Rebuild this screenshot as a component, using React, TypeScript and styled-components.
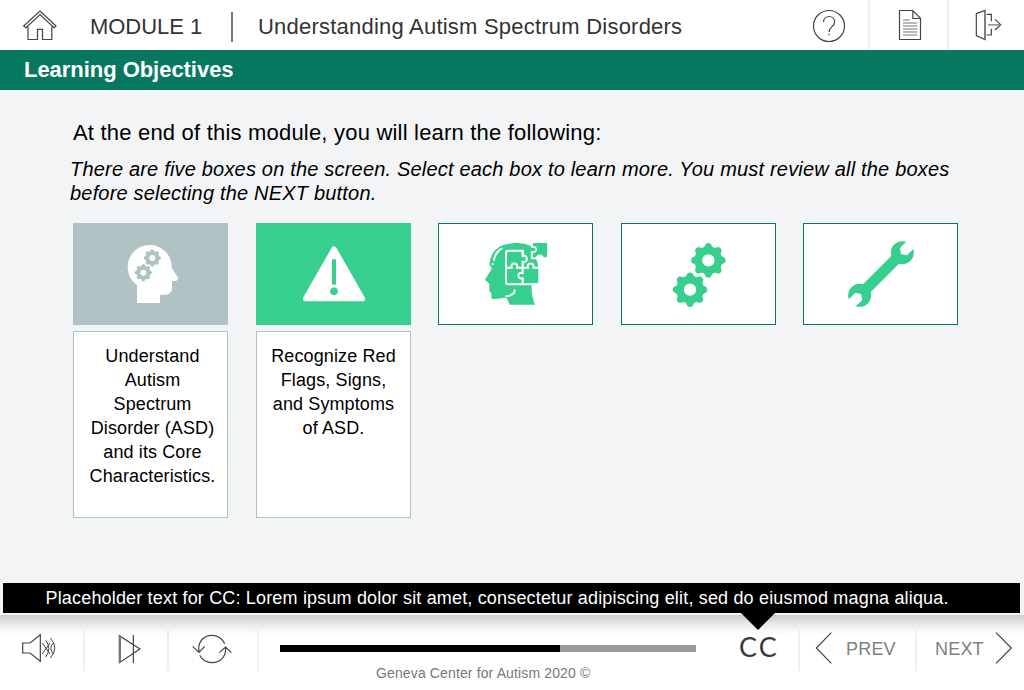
import React from 'react';
import styled, { createGlobalStyle } from 'styled-components';

const GREEN = '#36cf8e';
const TEAL = '#077860';
const MUTED = '#b0c2c4';
const INK = '#444';

const GlobalStyle = createGlobalStyle`
  * { box-sizing: border-box; }
  body {
    margin: 0;
    background: #f2f4f6;
    font-family: 'Liberation Sans', Arial, sans-serif;
    letter-spacing: 0.2px;
    color: #000;
  }
  h1, h2, p { margin: 0; font-weight: normal; }
  svg { display: block; flex: none; }
`;

const Page = styled.div`
  width: 1024px;
  height: 690px;
  display: flex;
  flex-direction: column;
  overflow: hidden;
`;

const Header = styled.header`
  height: 50px;
  flex: none;
  display: flex;
  align-items: center;
  background: #fff;
  color: #333;
  font-size: 22px;
  padding-left: 23px;
`;

const ModuleName = styled.span`
  width: 141px;
  padding: 3px 0 0 32px;
  letter-spacing: -0.05px;
  white-space: nowrap;
`;

const TitleRule = styled.div`
  width: 2px;
  height: 30px;
  margin: 3px 25px 0 32px;
  background: #777;
`;

const Title = styled.h1`
  flex: 1;
  font-size: 22px;
  letter-spacing: 0.22px;
  padding-top: 3px;
`;

const Tool = styled.button<{ $w: number; $pad: number; $line?: boolean }>`
  width: ${p => p.$w}px;
  height: 50px;
  padding: 0 0 0 ${p => p.$pad}px;
  border: 0;
  border-left: ${p => (p.$line ? '2px solid #f0f0f0' : '0')};
  background: none;
  display: flex;
  align-items: center;
`;

const SectionBar = styled.h2`
  height: 40px;
  flex: none;
  display: flex;
  align-items: center;
  padding-left: 24px;
  background: ${TEAL};
  color: #fff;
  font-size: 22px;
  font-weight: bold;
  letter-spacing: -0.04px;
`;

const Content = styled.main`
  height: 493px;
  flex: none;
  padding: 30px 66px 0 73px;
`;

const Lead = styled.p`
  font-size: 22px;
  line-height: 26px;
`;

const Instruction = styled.p`
  margin: 11px 0 18px -3px;
  font-size: 20px;
  line-height: 24px;
  font-style: italic;
  letter-spacing: 0.19px;
  white-space: nowrap;
`;

const Cards = styled.div`
  display: flex;
  justify-content: space-between;
  align-items: flex-start;
`;

const Column = styled.div`
  width: 155px;
  display: flex;
  flex-direction: column;
  gap: 6px;
`;

const Tile = styled.button<{ $fill?: string }>`
  width: 155px;
  height: 102px;
  padding: 0;
  border: 0;
  background: ${p => p.$fill || '#fff'};
  box-shadow: ${p => (p.$fill ? 'none' : `inset 0 0 0 1px ${TEAL}`)};
`;

const Detail = styled.div<{ $inset: number }>`
  height: 187px;
  padding: 12px 0 0 ${p => p.$inset}px;
  border: 1px solid ${MUTED};
  background: #fff;
  font-size: 18px;
  line-height: 24px;
  letter-spacing: 0.12px;
  text-align: center;
`;

const Caption = styled.div`
  position: relative;
  z-index: 1;
  height: 30px;
  flex: none;
  margin: 0 4px 2px 3px;
  padding-left: 42.5px;
  background: #000;
  color: #fff;
  font-size: 18px;
  line-height: 30px;
  letter-spacing: 0.17px;
  white-space: nowrap;
`;

const Pointer = styled.div`
  position: absolute;
  left: 737px;
  top: 29px;
  border: 18px solid transparent;
  border-top-color: #000;
  border-bottom: 0;
`;

const Footer = styled.footer`
  height: 75px;
  flex: none;
  display: flex;
  padding-top: 9px;
  background: linear-gradient(#cccccc 0, #e2e2e2 7px, #f7f7f7 15px, #fff 20px);
`;

const Cell = styled.div<{ $w: number; $pad: number; $line?: boolean }>`
  width: ${p => p.$w}px;
  height: 47px;
  padding-left: ${p => p.$pad}px;
  border-right: ${p => (p.$line ? '2px solid #f0f0f0' : '0')};
  display: flex;
  align-items: center;
  color: #808080;
  font-size: 18px;
`;

const NextCell = styled(Cell)`
  justify-content: space-between;
`;

const Progress = styled.div`
  width: 460px;
  padding: 21px 0 0 21px;
`;

const Track = styled.div`
  width: 416px;
  height: 7px;
  background: #999;
`;

const Played = styled.div`
  height: 7px;
  background: #000;
`;

const Copyright = styled.p`
  margin: 13px 0 0 96px;
  color: #777;
  font-size: 14px;
  line-height: 17px;
  letter-spacing: 0.13px;
`;

const CcLabel = styled.span`
  margin-top: -2px;
  font-family: Lato, sans-serif;
  font-size: 27px;
  letter-spacing: 2px;
  color: #3a3a3a;
`;

const NavText = styled.span<{ $gap: number }>`
  margin: 3px 0 0 ${p => p.$gap}px;
`;

const Line = styled.svg`
  fill: none;
  stroke: ${INK};
  stroke-width: 3.6;
`;

const gear = (cx: number, cy: number, r: number, hole: number) => {
  const pt = (rad: number, deg: number) => {
    const a = (deg * Math.PI) / 180;
    return `${(cx + rad * Math.cos(a)).toFixed(1)},${(cy + rad * Math.sin(a)).toFixed(1)}`;
  };
  let d = '';
  for (let i = 0; i < 8; i++) {
    const a = i * 45;
    d += `${i ? 'L' : 'M'}${pt(r * 0.83, a - 15)}L${pt(r * 0.97, a - 8)}Q${pt(r * 1.03, a)} ${pt(r * 0.97, a + 8)}L${pt(r * 0.83, a + 15)}Q${pt(r * 0.77, a + 22.5)} ${pt(r * 0.83, a + 30)}`;
  }
  return `${d}ZM${cx - hole},${cy}a${hole},${hole} 0 1 0 ${hole * 2},0a${hole},${hole} 0 1 0 ${-hole * 2},0Z`;
};

const HeadGears = () => (
  <svg width="155" height="102" viewBox="39 24 465 306">
    <path fill="#fff" d="M231,264V210A66,66 0 1 1 335,158L353,186Q356,198 345,198H336V222Q335,238 316,239H300V264Z" />
    <path fill={MUTED} fillRule="evenodd" d={gear(277, 129, 26, 9)} />
    <path fill={MUTED} fillRule="evenodd" d={gear(250, 173, 26, 9)} />
  </svg>
);

const Warning = () => (
  <svg width="155" height="102" viewBox="18 24 465 306">
    <path d="M252,102L337,251H167Z" fill="#fff" stroke="#fff" strokeWidth="16" strokeLinejoin="round" />
    <rect x="246" y="133" width="12" height="76" fill={GREEN} />
    <circle cx="252" cy="229" r="11.5" fill={GREEN} />
  </svg>
);

const HeadPuzzle = () => (
  <svg width="155" height="102" viewBox="24 24 465 306">
    <path
      fill={GREEN}
      d="M178,150C182,118 194,84 266,84Q288,85 304,94V131H318Q323,140 325,157V205H305Q303,240 315,269H240L229,248Q208,250 190,253Q184,252 184,246V234L178,228V206L165,194Q172,182 184,164V155Z"
    />
    <path fill={GREEN} d="M306,84H351V127H341A12,12 0 0 0 318,127L309,129V113L303,110V96L309,94Z" />
    <g fill="none" stroke="#fff" strokeWidth="6">
      <path d="M278,120V107H234Q228,107 228,113V201Q228,208 235,208H330" />
      <path d="M278,105V123C295,118 295,145 278,140V158" />
      <path d="M228,158H245C240,141 266,141 261,158H294C289,141 315,141 310,158H328" />
      <path d="M278,158V174C261,169 261,195 278,190V208" />
      <path strokeWidth="5" d="M306,82V96C324,92 323,115 305,111V130H318" />
      <path strokeLinecap="round" d="M192,135Q195,112 215,101M229,244Q254,240 254,226" />
    </g>
    <circle cx="188" cy="147" r="3.5" fill="#fff" />
  </svg>
);

const Gears = () => (
  <svg width="155" height="102" viewBox="33 24 465 306">
    <path fill={GREEN} fillRule="evenodd" d={gear(295, 136, 52, 18.5)} />
    <path fill={GREEN} fillRule="evenodd" d={gear(240, 224, 52, 18.5)} />
  </svg>
);

const Wrench = () => (
  <svg width="155" height="102" viewBox="24 24 465 306">
    <path d="M310,125L206,229" stroke={GREEN} strokeWidth="33" />
    <circle cx="322" cy="113" r="34.5" fill={GREEN} />
    <circle cx="194" cy="241" r="34.5" fill={GREEN} />
    <path fill="#fff" d="M333,81L315,99L318,118L336,121L355,102L370,66Z" />
    <path fill="#fff" d="M162,252L181,233L198,237L202,255L183,273L146,288Z" />
  </svg>
);

const cards = [
  { Icon: HeadGears, fill: MUTED, inset: 4, lines: ['Understand', 'Autism', 'Spectrum', 'Disorder (ASD)', 'and its Core', 'Characteristics.'] },
  { Icon: Warning, fill: GREEN, inset: 1, lines: ['Recognize Red', 'Flags, Signs,', 'and Symptoms', 'of ASD.'] },
  { Icon: HeadPuzzle },
  { Icon: Gears },
  { Icon: Wrench },
];

export default function App() {
  const played = 280;
  return (
    <Page>
      <GlobalStyle />
      <Header>
        <Line width="35" height="32" viewBox="69 27 105 96">
          <path d="M120,33L168,78L162,83L120,44L78,83L71,78ZM84,80V118.500H112.500V88H127.500V118.500H155.500V80" />
        </Line>
        <ModuleName>MODULE 1</ModuleName>
        <TitleRule />
        <Title>Understanding Autism Spectrum Disorders</Title>
        <Tool $w={56} $pad={0} aria-label="Help">
          <Line width="34" height="36" viewBox="96 21 102 108">
            <circle cx="147" cy="78" r="46.500" />
            <path d="M130.500,66C131,44 164,44 164,66C164,80 147,80 147,96M147,101V106" />
          </Line>
        </Tool>
        <Tool $w={79} $pad={28} $line aria-label="Transcript">
          <Line width="24" height="32" viewBox="354 27 72 96">
            <path d="M358.500,31.500H398L421.500,55V118.500H358.500ZM398.500,31V55.500H422" />
            <path stroke="#777" d="M369,60H389M369,69H412M369,78H412M369,87H412M369,96H412M369,105H412" />
          </Line>
        </Tool>
        <Tool $w={77} $pad={26} $line aria-label="Exit">
          <Line width="28" height="32" viewBox="585 27 84 96">
            <path d="M589,41L615,31V119L589,107ZM620,43H634V64M634,86V105H620M645,58L662,74L645,90" />
            <path stroke="#777" d="M615,31V119M624,74.500H662" />
          </Line>
        </Tool>
      </Header>
      <SectionBar>Learning Objectives</SectionBar>
      <Content>
        <Lead>At the end of this module, you will learn the following:</Lead>
        <Instruction>
          There are five boxes on the screen. Select each box to learn more. You must review all the boxes
          <br />
          before selecting the NEXT button.
        </Instruction>
        <Cards>
          {cards.map(({ Icon, fill, lines, inset = 0 }, i) => (
            <Column key={i}>
              <Tile $fill={fill}>
                <Icon />
              </Tile>
              {lines && (
                <Detail $inset={inset}>
                  {lines.map(line => (
                    <p key={line}>{line}</p>
                  ))}
                </Detail>
              )}
            </Column>
          ))}
        </Cards>
      </Content>
      <Caption>
        Placeholder text for CC: Lorem ipsum dolor sit amet, consectetur adipiscing elit, sed do eiusmod magna aliqua.
        <Pointer />
      </Caption>
      <Footer>
        <Cell $w={85} $pad={21} $line>
          <Line width="36" height="31" viewBox="63 171 108 93">
            <path d="M68,204H90L121,179V259L90,234H68Z" />
            <path strokeWidth="3" d="M127,204L150,237M127,237L150,204M137,196Q156,220 137,246M151,189Q178,219 151,249M160,204Q145,220 160,237" />
          </Line>
        </Cell>
        <Cell $w={84} $pad={32} $line>
          <Line width="26" height="33" viewBox="351 168 78 99">
            <path d="M358,182V263L420,222ZM400,180V264" />
            <path stroke="#777" strokeWidth="6" d="M360,182V263" />
          </Line>
        </Cell>
        <Cell $w={90} $pad={22} $line>
          <Line width="42" height="33" viewBox="573 168 126 99">
            <path d="M597,230C592,202 610,181 636,181C653,181 666,190 674,206M578,214L597,232L614,214M599,241C607,256 620,263 636,263C662,263 680,242 677,216M658,233L677,216L694,233" />
          </Line>
        </Cell>
        <Progress>
          <Track>
            <Played style={{ width: played }} />
          </Track>
          <Copyright>Geneva Center for Autism 2020 ©</Copyright>
        </Progress>
        <Cell $w={81} $pad={20} $line>
          <CcLabel>CC</CcLabel>
        </Cell>
        <Cell $w={117} $pad={15} $line>
          <Line width="18" height="35" viewBox="345 165 54 105">
            <path d="M394,173L349,219L394,265" />
          </Line>
          <NavText $gap={13}>PREV</NavText>
        </Cell>
        <NextCell $w={96} $pad={18}>
          <NavText $gap={0}>NEXT</NavText>
          <Line width="18" height="35" viewBox="855 165 54 105">
            <path d="M858,173L904,219L858,265" />
          </Line>
        </NextCell>
      </Footer>
    </Page>
  );
}
